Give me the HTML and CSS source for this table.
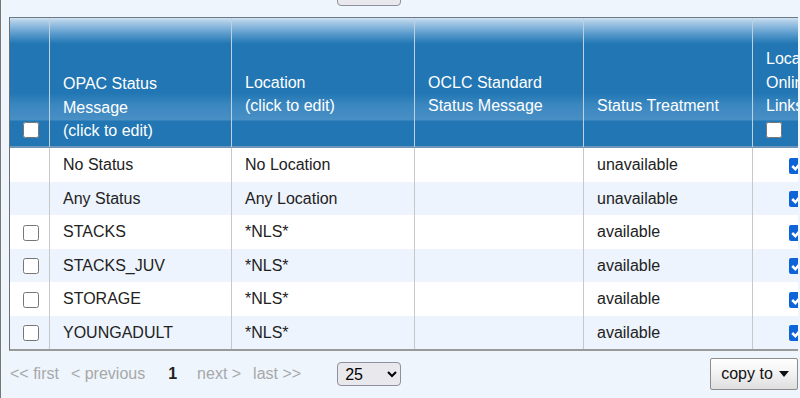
FILE: index.html
```html
<!DOCTYPE html>
<html lang="en">
<head>
<meta charset="utf-8">
<title>OPAC Status Messages</title>
<link rel="stylesheet" href="styles.css">
</head>
<body>
<div class="panel">
  <div class="pager-top">
    <div class="pager">
      <span class="pg-link">&lt;&lt; first</span>
      <span class="pg-link">&lt; previous</span>
      <span class="pg-current">1</span>
      <span class="pg-link">next &gt;</span>
      <span class="pg-link">last &gt;&gt;</span>
      <select class="pg-size"><option>25</option><option>50</option><option>100</option></select>
    </div>
  </div>

  <div class="table-wrap">
    <table class="grid">
      <colgroup>
        <col class="w1"><col class="w2"><col class="w3"><col class="w4"><col class="w5"><col class="w6">
      </colgroup>
      <thead>
        <tr class="hrow1">
          <th class="hd c1"></th>
          <th class="hd" rowspan="2">OPAC Status Message<br>(click to edit)</th>
          <th class="hd">Location<br>(click to edit)</th>
          <th class="hd">OCLC Standard Status Message</th>
          <th class="hd">Status Treatment</th>
          <th class="hd">Local Online Links</th>
        </tr>
        <tr class="hrow2">
          <th class="c1"><input type="checkbox" class="cb cb-head"></th>
          <th></th>
          <th></th>
          <th></th>
          <th><input type="checkbox" class="cb cb-head cb-left"></th>
        </tr>
      </thead>
      <tbody>
        <tr>
          <td class="c1"></td>
          <td>No Status</td>
          <td>No Location</td>
          <td></td>
          <td>unavailable</td>
          <td class="c6"><input type="checkbox" class="cb" checked></td>
        </tr>
        <tr class="alt">
          <td class="c1"></td>
          <td>Any Status</td>
          <td>Any Location</td>
          <td></td>
          <td>unavailable</td>
          <td class="c6"><input type="checkbox" class="cb" checked></td>
        </tr>
        <tr>
          <td class="c1"><input type="checkbox" class="cb"></td>
          <td>STACKS</td>
          <td>*NLS*</td>
          <td></td>
          <td>available</td>
          <td class="c6"><input type="checkbox" class="cb" checked></td>
        </tr>
        <tr class="alt">
          <td class="c1"><input type="checkbox" class="cb"></td>
          <td>STACKS_JUV</td>
          <td>*NLS*</td>
          <td></td>
          <td>available</td>
          <td class="c6"><input type="checkbox" class="cb" checked></td>
        </tr>
        <tr>
          <td class="c1"><input type="checkbox" class="cb"></td>
          <td>STORAGE</td>
          <td>*NLS*</td>
          <td></td>
          <td>available</td>
          <td class="c6"><input type="checkbox" class="cb" checked></td>
        </tr>
        <tr class="alt">
          <td class="c1"><input type="checkbox" class="cb"></td>
          <td>YOUNGADULT</td>
          <td>*NLS*</td>
          <td></td>
          <td>available</td>
          <td class="c6"><input type="checkbox" class="cb" checked></td>
        </tr>
      </tbody>
    </table>
  </div>

  <div class="footer">
    <div class="pager">
      <span class="pg-link">&lt;&lt; first</span>
      <span class="pg-link">&lt; previous</span>
      <span class="pg-current">1</span>
      <span class="pg-link">next &gt;</span>
      <span class="pg-link">last &gt;&gt;</span>
      <select class="pg-size"><option>25</option><option>50</option><option>100</option></select>
    </div>
    <button class="copy-btn" type="button">copy to <svg class="caret" width="10" height="6" viewBox="0 0 10 6"><path d="M0 0 H10 L5 6 Z" fill="#111"/></svg></button>
  </div>
</div>
</body>
</html>
```

FILE: styles.css
```css
* { box-sizing: border-box; }

html, body {
  margin: 0;
  padding: 0;
  background: #eef5fd;
  font-family: "Liberation Sans", Arial, sans-serif;
  font-size: 16px;
  color: #222;
}

.panel {
  height: 398px;
  border-left: 1px solid #777;
  padding: 0 2px 0 8px;
  background: #eef5fd;
  overflow: hidden;
}

/* pager */
.pager-top {
  height: 6px;
  overflow: hidden;
  display: flex;
  align-items: flex-end;
  margin-bottom: 11px;
}

.pager {
  display: flex;
  align-items: center;
  gap: 12px;
  flex-shrink: 0;
  padding-left: 1px;
}

.pager-top .pg-link,
.pager-top .pg-current {
  align-self: flex-start;
}

.pg-link {
  color: #a8a8a8;
  white-space: nowrap;
}

.pg-current {
  font-weight: bold;
  color: #222;
  padding: 0 8px 0 11px;
}

.pg-size {
  margin-left: 24px;
  width: 64px;
  height: 24px;
  font-family: "Liberation Sans", Arial, sans-serif;
  font-size: 16px;
  color: #000;
  background-color: #e9e9ed;
  border: 1px solid #8f8f9d;
  border-radius: 4px;
  padding: 0 0 0 3px;
}

/* table */
.table-wrap {
  overflow: hidden;
}

.grid {
  table-layout: fixed;
  width: 831px;
  border-collapse: separate;
  border-spacing: 0;
  border-top: 1px solid #6d7b89;
  border-left: 1px solid #707070;
  border-bottom: 2px solid #9a9a9a;
}

.w1 { width: 39px; }
.w2 { width: 182px; }
.w3 { width: 183px; }
.w4 { width: 169px; }
.w5 { width: 169px; }
.w6 { width: 88px; }

.grid th {
  color: #fff;
  font-weight: normal;
  text-align: left;
  font-size: 16px;
  line-height: 23.6px;
  padding: 0 13px 3px 13px;
  vertical-align: bottom;
  border-left: 1px solid #bfd0df;
  background-color: #2176b3;
}

.grid th.c1 { border-left: none; }

.grid th.hd {
  height: 103px;
  background-image: linear-gradient(to bottom,
    #cfe2f2 0px,
    #b0cfe8 3px,
    #80b2da 10px,
    #4b92c7 18px,
    #2176b3 26px,
    #2176b3 75px,
    #2e7fba 81px,
    #3b87c0 87px,
    #4890c5 102px,
    #2176b3 103px);
  background-size: 100% 103px;
  background-repeat: no-repeat;
}

.grid th[rowspan] {
  border-bottom: 2px solid #6f96b9;
}

.hrow2 th {
  height: 27px;
  padding: 1px 13px 0 13px;
  vertical-align: top;
  border-bottom: 2px solid #6f96b9;
}

.hrow2 th.c1 {
  padding: 1px 0 0 3px;
}

.cb {
  width: 16px;
  height: 16px;
  margin: 0;
  vertical-align: middle;
  accent-color: #0d63d8;
}

.cb-head {
  display: block;
  margin: 0 auto;
}

.cb-head.cb-left {
  margin: 0;
}

.grid td {
  padding: 5px 13px;
  line-height: 23.5px;
  height: 33.5px;
  white-space: nowrap;
  overflow: hidden;
  border-left: 1px solid #c8c8c8;
  background: #fff;
  color: #222;
}

.grid tr.alt td {
  background: #edf4fd;
}

.grid td.c1 {
  border-left: none;
  text-align: center;
  padding: 5px 0 5px 3px;
}

.grid td.c6 {
  text-align: center;
  padding: 5px 0;
}

/* footer */
.footer {
  display: flex;
  justify-content: space-between;
  align-items: center;
  padding-top: 7px;
}

.copy-btn {
  width: 88px;
  height: 32px;
  display: flex;
  align-items: center;
  justify-content: center;
  gap: 6px;
  padding: 0 0 0 2px;
  font-family: "Liberation Sans", Arial, sans-serif;
  font-size: 16px;
  color: #111;
  background: linear-gradient(to bottom, #ffffff 0%, #f3f3f3 45%, #dedede 100%);
  border: 1px solid #8c8c8c;
  border-radius: 2px;
}

.caret {
  display: block;
  margin-top: -1px;
}
```
